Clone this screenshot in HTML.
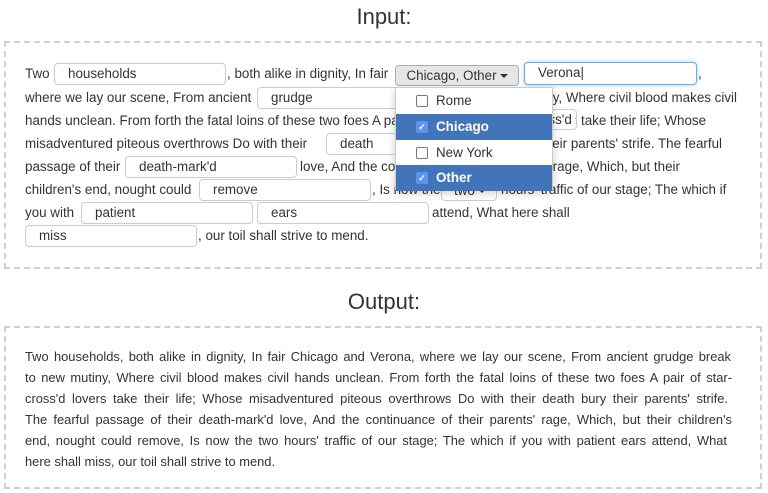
<!DOCTYPE html>
<html><head><meta charset="utf-8"><style>
*{box-sizing:border-box;margin:0;padding:0}
body{width:768px;height:493px;background:#fff;font-family:"Liberation Sans",sans-serif;color:#333;position:relative;overflow:hidden}
.h{position:absolute;left:0;width:768px;text-align:center;font-size:22px;color:#333}
.box{position:absolute;left:4px;width:758px;border:2px dashed #d0d0d0}
.t{position:absolute;font-size:13.4px;white-space:nowrap;line-height:16px}
.in{position:absolute;height:22px;border:1px solid #ccc;border-radius:4px;font-size:13.4px;padding-left:13px;line-height:20px;background:#fff;white-space:nowrap}
.sel{position:absolute;height:21px;border:1px solid #ccc;border-radius:4px;font-size:13.4px;line-height:19px;padding-left:12px;background:#fff;white-space:nowrap;overflow:hidden}
.car{display:inline-block;width:0;height:0;border-left:4px solid transparent;border-right:4px solid transparent;border-top:4px solid #333;vertical-align:middle;margin-left:3px}
.o{position:absolute;left:25px;font-size:12.9px;white-space:nowrap;line-height:16px;text-align:justify;text-align-last:justify}
.menu{position:absolute;left:395px;top:87px;width:158px;height:103px;background:#fff;border:1px solid #ccc;box-shadow:0 3px 8px rgba(0,0,0,.2)}
.it{position:absolute;left:0;width:156px;height:26px;font-size:13.4px;line-height:26px;padding-left:40px}
.it.a{background:#4274b9;color:#fff;font-weight:bold}
.cb{position:absolute;left:20px;top:7px;width:12px;height:12px;border:1px solid #777;border-radius:2px;background:#fff}
.it.a .cb{background:#5a96f0;border-color:#5a96f0;color:#fff;font-size:9px;line-height:10px;text-align:center}
</style></head><body>
<div class="h" style="top:4px">Input:</div>
<div class="box" style="top:41px;height:228px"></div>
<div class="h" style="top:289px">Output:</div>
<div class="box" style="top:326px;height:163px"></div>

<div class="t" style="left:25px;top:66px">Two</div>
<div class="in" style="left:54px;top:63px;width:172px">households</div>
<div class="t" style="left:227px;top:66px">, both alike in dignity, In fair</div>
<div style="position:absolute;left:395px;top:65px;width:124px;height:21px;background:#e6e6e6;border:1px solid #adadad;border-radius:4px;font-size:13.4px;line-height:19px;text-align:center;white-space:nowrap">Chicago, Other<span class="car"></span></div>
<div class="in" style="left:524px;top:62px;width:173px;height:23px;border-color:#66afe9;box-shadow:0 0 4px rgba(102,175,233,.6)">Verona|</div>
<div class="t" style="left:698px;top:66px">,</div>

<div class="t" style="left:25px;top:90px">where we lay our scene, From ancient</div>
<div class="in" style="left:257px;top:87px;width:172px">grudge</div>
<div class="t" style="right:31px;top:90px">mutiny, Where civil blood makes civil</div>

<div class="t" style="left:25px;top:113px">hands unclean. From forth the fatal loins of these two foes A pair of</div>
<div class="sel" style="left:490px;top:109px;width:87px">star-cross'd<span class="car"></span></div>
<div class="t" style="left:581px;top:113px">take their life; Whose</div>

<div class="t" style="left:25px;top:136px">misadventured piteous overthrows Do with their</div>
<div class="in" style="left:326px;top:133px;width:172px">death</div>
<div class="t" style="right:46px;top:136px">bury their parents' strife. The fearful</div>

<div class="t" style="left:25px;top:159px">passage of their</div>
<div class="in" style="left:125px;top:156px;width:172px">death-mark'd</div>
<div class="t" style="left:300px;top:159px">love, And the continuance of their parents' rage, Which, but their</div>

<div class="t" style="left:25px;top:182px">children's end, nought could</div>
<div class="in" style="left:199px;top:179px;width:172px">remove</div>
<div class="t" style="left:372px;top:182px">, Is now the</div>
<div class="sel" style="left:441px;top:180px;width:56px">two<span class="car"></span></div>
<div class="t" style="left:501px;top:182px">hours' traffic of our stage; The which if</div>

<div class="t" style="left:25px;top:205px">you with</div>
<div class="in" style="left:81px;top:202px;width:172px">patient</div>
<div class="in" style="left:257px;top:202px;width:172px">ears</div>
<div class="t" style="left:432px;top:205px">attend, What here shall</div>

<div class="in" style="left:25px;top:225px;width:172px">miss</div>
<div class="t" style="left:198px;top:228px">, our toil shall strive to mend.</div>

<div class="menu">
<div class="it" style="top:0"><span class="cb"></span>Rome</div>
<div class="it a" style="top:26px"><span class="cb">✓</span>Chicago</div>
<div class="it" style="top:52px"><span class="cb"></span>New York</div>
<div class="it a" style="top:77px"><span class="cb">✓</span>Other</div>
</div>

<div class="o" style="top:349px;width:706px">Two households, both alike in dignity, In fair Chicago and Verona, where we lay our scene, From ancient grudge break</div>
<div class="o" style="top:370px;width:707px">to new mutiny, Where civil blood makes civil hands unclean. From forth the fatal loins of these two foes A pair of star-</div>
<div class="o" style="top:391px;width:703px">cross'd lovers take their life; Whose misadventured piteous overthrows Do with their death bury their parents' strife.</div>
<div class="o" style="top:412px;width:707px">The fearful passage of their death-mark'd love, And the continuance of their parents' rage, Which, but their children's</div>
<div class="o" style="top:433px;width:702px">end, nought could remove, Is now the two hours' traffic of our stage; The which if you with patient ears attend, What</div>
<div class="o" style="top:454px;text-align:left;text-align-last:left">here shall miss, our toil shall strive to mend.</div>
</body></html>
